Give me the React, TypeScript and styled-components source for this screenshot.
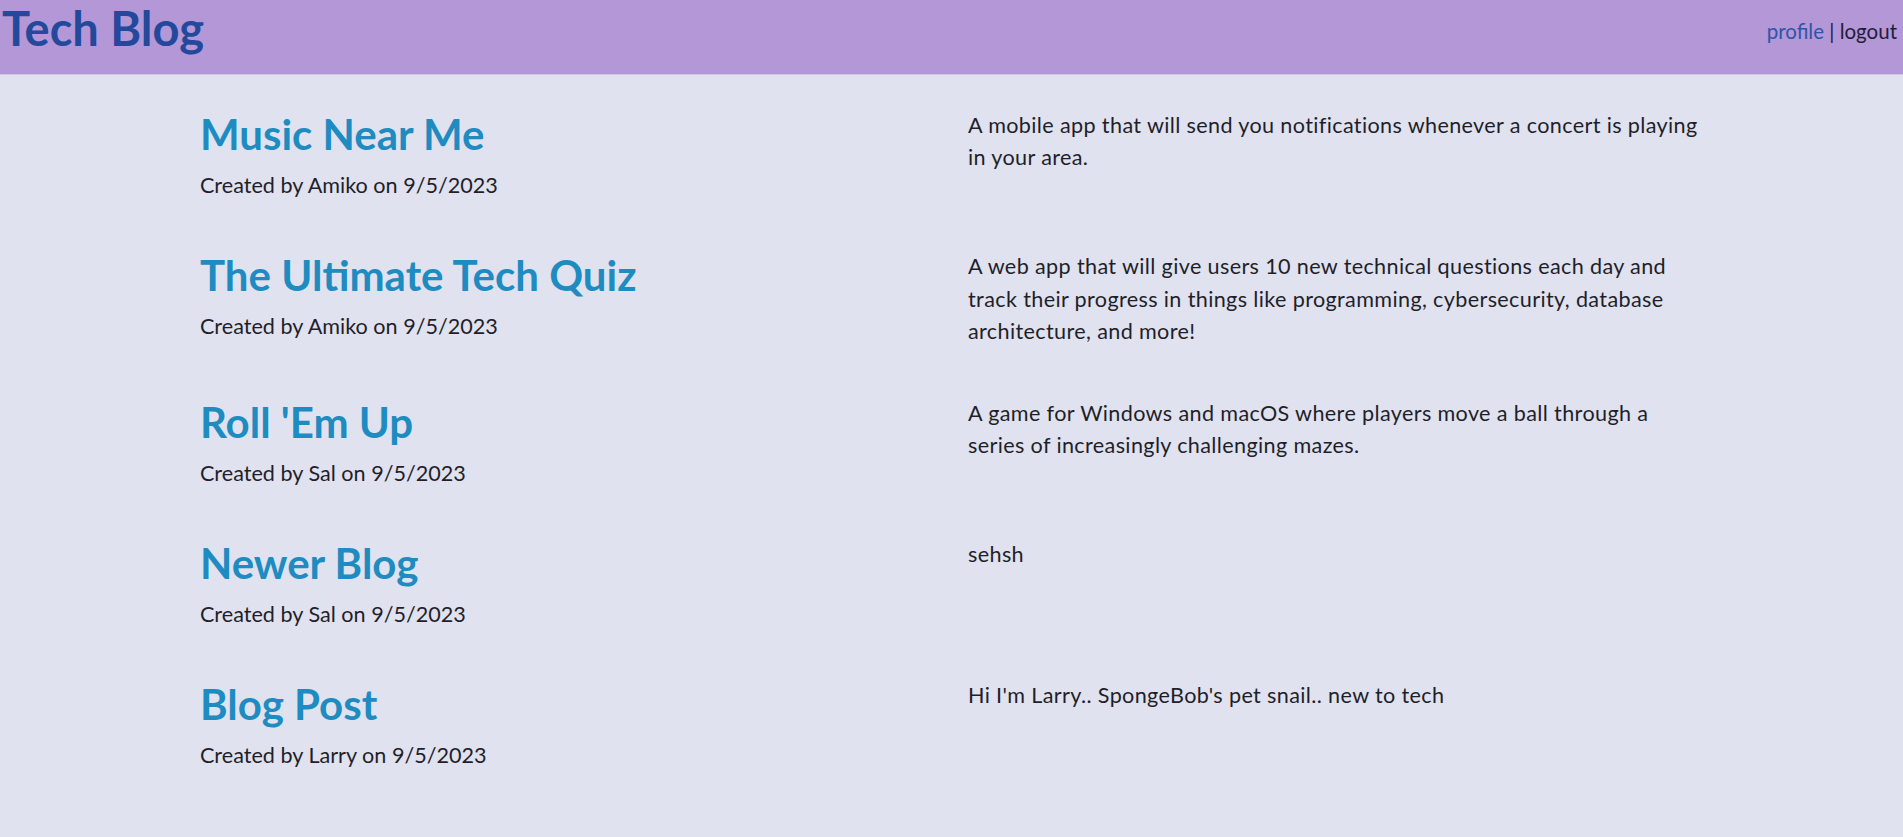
import React from "react";
import styled, { createGlobalStyle } from "styled-components";

const GlobalStyle = createGlobalStyle`
  html, body {
    margin: 0;
    padding: 0;
    background: #e0e2ef;
  }
  body {
    font-family: Lato, "Open Sans", "Liberation Sans", sans-serif;
    color: #1f1f2a;
    min-height: 837px;
  }
`;

const Header = styled.header`
  display: flex;
  justify-content: space-between;
  align-items: flex-start;
  height: 75px;
  box-sizing: border-box;
  padding: 0 6px 0 2px;
  background: #b497d7;
  border-bottom: 1px solid #cfc8e2;
`;

const Brand = styled.h1`
  margin: 0;
  font-size: 47px;
  line-height: 56px;
  font-weight: 700;
  color: #22499b;
`;

const Nav = styled.nav`
  margin-top: 19px;
  font-size: 20.5px;
  line-height: 24px;
  color: #1f1f36;
`;

const NavLink = styled.a<{ $tone: "blue" | "dark" }>`
  color: ${(p) => (p.$tone === "blue" ? "#2f55a8" : "#221c3a")};
  text-decoration: none;
  cursor: pointer;
`;

const Main = styled.main`
  display: flex;
  flex-direction: column;
  gap: 49px;
  padding: 34px 200px 40px;
`;

const Post = styled.article`
  display: grid;
  grid-template-columns: 768px 1fr;
  align-items: start;
`;

const PostHead = styled.div`
  display: flex;
  flex-direction: column;
  gap: 10px;
`;

const Title = styled.h2`
  margin: 0;
  font-size: 42px;
  line-height: 50px;
  font-weight: 700;
  color: #1e8bc1;
`;

const Meta = styled.p`
  margin: 0;
  font-size: 21.6px;
  line-height: 32.4px;
  color: #1f1f2a;
`;

const Description = styled.p`
  margin: 0;
  font-size: 21.6px;
  line-height: 32.4px;
  letter-spacing: 0.36px;
  color: #1f1f2a;
`;

const posts = [
  {
    title: "Music Near Me",
    author: "Amiko",
    date: "9/5/2023",
    body: "A mobile app that will send you notifications whenever a concert is playing in your area.",
  },
  {
    title: "The Ultimate Tech Quiz",
    author: "Amiko",
    date: "9/5/2023",
    body: "A web app that will give users 10 new technical questions each day and track their progress in things like programming, cybersecurity, database architecture, and more!",
  },
  {
    title: "Roll 'Em Up",
    author: "Sal",
    date: "9/5/2023",
    body: "A game for Windows and macOS where players move a ball through a series of increasingly challenging mazes.",
  },
  {
    title: "Newer Blog",
    author: "Sal",
    date: "9/5/2023",
    body: "sehsh",
  },
  {
    title: "Blog Post",
    author: "Larry",
    date: "9/5/2023",
    body: "Hi I'm Larry.. SpongeBob's pet snail.. new to tech",
  },
];

export default function App() {
  return (
    <>
      <GlobalStyle />
      <Header>
        <Brand>Tech Blog</Brand>
        <Nav>
          <NavLink $tone="blue">profile</NavLink> | <NavLink $tone="dark">logout</NavLink>
        </Nav>
      </Header>
      <Main>
        {posts.map((p) => (
          <Post key={p.title}>
            <PostHead>
              <Title>{p.title}</Title>
              <Meta>
                Created by {p.author} on {p.date}
              </Meta>
            </PostHead>
            <Description>{p.body}</Description>
          </Post>
        ))}
      </Main>
    </>
  );
}
